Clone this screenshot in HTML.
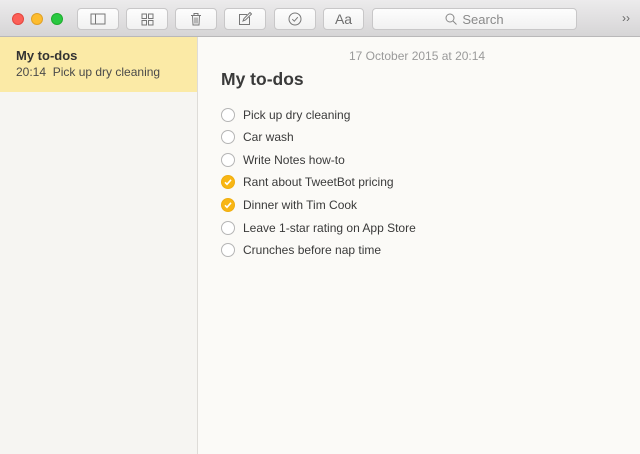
<!DOCTYPE html><html><head><style>
*{margin:0;padding:0;box-sizing:border-box}
body{width:640px;height:454px;overflow:hidden;font-family:"Liberation Sans",sans-serif;background:#fbfaf7;position:relative}
.tb{position:absolute;left:0;top:0;width:640px;height:37px;background:linear-gradient(#ecebec,#d6d5d6);border-bottom:1px solid #b9b8b9}
.dot{position:absolute;top:13px;width:12px;height:12px;border-radius:50%}
.btn{position:absolute;top:8px;height:22px;background:linear-gradient(#fdfdfd,#f1f1f1);border:1px solid #c8c7c8;border-radius:4px;display:flex;align-items:center;justify-content:center;color:#6f6f6f}
.side{position:absolute;left:0;top:37px;width:198px;height:417px;background:#f6f5f2;border-right:1px solid #dedcd8}
.sel{position:absolute;left:0;top:37px;width:197px;height:55px;background:#fbeaa6}
.item{position:absolute;left:221px;font-size:12px;color:#3a3a3a;height:16px;line-height:16px}
.c{position:absolute;left:-0px;top:1px;width:14px;height:14px;border-radius:50%;border:1px solid #b5b5b5;background:#fff}
.c.on{background:#f8b614;border-color:#f0ae10}
.item span{position:absolute;left:22px;white-space:nowrap}
</style></head><body>
<div class="tb">
<div class="dot" style="left:12px;background:#fc5f57;border:1px solid #e2463f"></div>
<div class="dot" style="left:31px;background:#fdbc2e;border:1px solid #e0a126"></div>
<div class="dot" style="left:51px;background:#29c841;border:1px solid #1eac2e"></div>
<div class="btn" style="left:77px;width:42px"><svg width="16" height="12"><rect x="1" y="1" width="14" height="10" fill="none" stroke="#777"/><line x1="5.5" y1="1" x2="5.5" y2="11" stroke="#777"/></svg></div>
<div class="btn" style="left:126px;width:42px"><svg width="13" height="13" fill="none" stroke="#777"><rect x="1" y="1" width="4.5" height="4.5"/><rect x="7.5" y="1" width="4.5" height="4.5"/><rect x="1" y="7.5" width="4.5" height="4.5"/><rect x="7.5" y="7.5" width="4.5" height="4.5"/></svg></div>
<div class="btn" style="left:175px;width:42px"><svg width="12" height="14" fill="none" stroke="#777"><path d="M1 3.5h10M4 3.5V1.5h4v2M2.5 3.5l.5 9.5h6l.5-9.5M5 5.5v6M7 5.5v6"/></svg></div>
<div class="btn" style="left:224px;width:42px"><svg width="14" height="14" fill="none" stroke="#777"><path d="M9 2.5H1.5v10h10V5"/><path d="M5 9l1-2.5 6-6 1.5 1.5-6 6z"/></svg></div>
<div class="btn" style="left:274px;width:42px"><svg width="14" height="14" fill="none" stroke="#777"><circle cx="7" cy="7" r="6"/><path d="M4.3 7.2l2 2 3.5-4"/></svg></div>
<div class="btn" style="left:323px;width:41px;font-size:14px">Aa</div>
<div class="btn" style="left:372px;width:205px;font-size:13px;color:#8a8a8a"><svg width="12" height="12" fill="none" stroke="#888" style="margin-right:5px"><circle cx="5" cy="5" r="4"/><path d="M8 8l3.5 3.5"/></svg>Search</div>
<div style="position:absolute;left:622px;top:11px;font-size:12px;color:#666">››</div>
</div>
<div class="side"></div>
<div class="sel"></div>
<div style="position:absolute;left:16px;top:48px;font-size:13px;font-weight:bold;color:#333">My to-dos</div>
<div style="position:absolute;left:16px;top:65px;font-size:12px;color:#4a4a4a">20:14&nbsp;&nbsp;Pick up dry cleaning</div>
<div style="position:absolute;left:349px;top:49px;font-size:12px;color:#9a9a9a">17 October 2015 at 20:14</div>
<div style="position:absolute;left:221px;top:69px;font-size:17.5px;font-weight:bold;color:#3a3a3a">My to-dos</div>
<div class="item" style="top:107px"><div class="c"></div><span>Pick up dry cleaning</span></div>
<div class="item" style="top:129px"><div class="c"></div><span>Car wash</span></div>
<div class="item" style="top:152px"><div class="c"></div><span>Write Notes how-to</span></div>
<div class="item" style="top:174px"><div class="c on"><svg width="12" height="12" style="position:absolute;left:0;top:0"><path d="M3 6.3l2 2 4-4.5" fill="none" stroke="#fff" stroke-width="1.6"/></svg></div><span>Rant about TweetBot pricing</span></div>
<div class="item" style="top:197px"><div class="c on"><svg width="12" height="12" style="position:absolute;left:0;top:0"><path d="M3 6.3l2 2 4-4.5" fill="none" stroke="#fff" stroke-width="1.6"/></svg></div><span>Dinner with Tim Cook</span></div>
<div class="item" style="top:220px"><div class="c"></div><span>Leave 1-star rating on App Store</span></div>
<div class="item" style="top:242px"><div class="c"></div><span>Crunches before nap time</span></div>
</body></html>
